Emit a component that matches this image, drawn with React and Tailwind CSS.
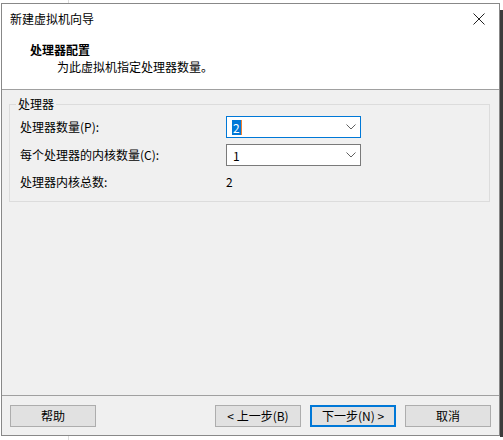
import { useState } from "react";

const font = { fontFamily: '"Noto Sans CJK SC", "Noto Sans", sans-serif' };

const Chevron = () => (
    <svg width="10" height="6" viewBox="0 0 10 6" className="shrink-0">
        <path d="M0.5 0.5 L5 5 L9.5 0.5" fill="none" stroke="#606060" strokeWidth="1" />
    </svg>
);

const Combo = ({ value, focused }) => (
    <div
        className={`w-[135px] h-[22px] bg-white flex items-center justify-between pl-[5px] pr-[4px] border ${
            focused ? "border-[#0078d7]" : "border-[#7a7a7a]"
        }`}
    >
        {focused ? (
            <span className="bg-[#0078d7] text-white leading-[15px] px-[1px] border-r border-[#f08030]">{value}</span>
        ) : (
            <span className="leading-[15px] px-[1px]">{value}</span>
        )}
        <Chevron />
    </div>
);

const Btn = ({ children, primary }) => (
    <button
        className={`w-[86px] h-[22px] bg-[#e1e1e1] flex items-center justify-center text-[12px] text-black ${
            primary ? "border-2 border-[#0078d7]" : "border border-[#adadad]"
        }`}
    >
        {children}
    </button>
);

const App = () => {
    const [count] = useState(2);
    const [cores] = useState(1);

    return (
        <div className="w-[503px] h-[440px] bg-white relative overflow-hidden text-[12px] text-black" style={font}>
            {/* stuff behind the dialog */}
            <div className="absolute left-[68px] top-0 w-px h-full bg-[#dcdcdc]" />
            <div className="absolute left-[500px] top-[10px] w-[3px] h-[427px] bg-[#3c3c3c]" />

            <div className="relative ml-[1px] mt-[3px] w-[499px] h-[433px] border border-[#888888] flex flex-col bg-[#f0f0f0]">
                {/* header */}
                <div className="bg-white border-b border-[#a0a0a0] pb-[14px]">
                    <div className="h-[29px] flex items-center justify-between pl-[8px] pr-[14px]">
                        <span>新建虚拟机向导</span>
                        <svg width="12" height="12" viewBox="0 0 12 12">
                            <path d="M0.5 0.5 L11.5 11.5 M11.5 0.5 L0.5 11.5" stroke="#222" strokeWidth="1" />
                        </svg>
                    </div>
                    <div className="pt-[9px] pl-[28px]">
                        <div className="font-bold leading-[16px]">处理器配置</div>
                        <div className="leading-[16px] pl-[27px] mt-[1px]">为此虚拟机指定处理器数量。</div>
                    </div>
                </div>

                {/* body */}
                <div className="flex-1">
                    <div className="relative mt-[14px] ml-[7px] mr-[9px] h-[98px] border border-[#dcdcdc] pl-[10px] pt-[11px]">
                        <span className="absolute -top-[9px] left-[6px] px-[2px] bg-[#f0f0f0] leading-[16px]">处理器</span>
                        <div className="flex items-center h-[22px]">
                            <span className="w-[206px]">处理器数量(P):</span>
                            <Combo value={count} focused />
                        </div>
                        <div className="flex items-center h-[22px] mt-[6px]">
                            <span className="w-[206px]">每个处理器的内核数量(C):</span>
                            <Combo value={cores} />
                        </div>
                        <div className="flex items-center h-[22px] mt-[5px]">
                            <span className="w-[206px]">处理器内核总数:</span>
                            <span>{count * cores}</span>
                        </div>
                    </div>
                </div>

                {/* footer */}
                <div className="border-t border-[#a0a0a0] h-[40px] pt-[9px] px-[8px] flex items-start">
                    <Btn>帮助</Btn>
                    <div className="flex-1" />
                    <div className="flex gap-[9px]">
                        <Btn>&lt; 上一步(B)</Btn>
                        <Btn primary>下一步(N) &gt;</Btn>
                        <Btn>取消</Btn>
                    </div>
                </div>
            </div>
        </div>
    );
};

export default App;
